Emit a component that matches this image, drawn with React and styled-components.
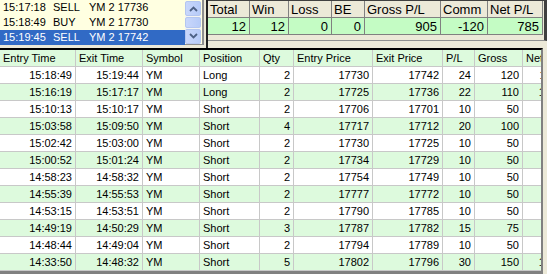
import React from 'react';
import styled, { createGlobalStyle } from 'styled-components';

const GlobalStyle = createGlobalStyle`
  html, body { margin: 0; padding: 0; background: #ECE9D8; }
  body { font-family: "Liberation Sans", Arial, sans-serif; font-size: 11px; color: #000; }
`;

const Window = styled.div`
  width: 547px;
  height: 274px;
  background: #ECE9D8;
  display: flex;
  flex-direction: column;
  overflow: hidden;
`;

const TopBar = styled.div`
  display: flex;
  height: 48px;
  flex-shrink: 0;
`;

const ListBox = styled.div`
  width: 202px;
  height: 44px;
  background: #FFFFE1;
  border-right: 2px solid #8E8F8F;
  border-bottom: 1px solid #8E8F8F;
  display: flex;
`;

const ListRows = styled.div`
  flex: 1;
  display: flex;
  flex-direction: column;
`;

const ListRow = styled.div`
  height: 15px;
  line-height: 15px;
  display: flex;
  padding-left: 3px;
  background: ${p => (p.$selected ? '#316AC5' : 'transparent')};
  color: ${p => (p.$selected ? '#fff' : '#000')};
  span:nth-child(1) { width: 50px; }
  span:nth-child(2) { width: 36px; }
`;

const ScrollBar = styled.div`
  width: 16px;
  margin: 1px 1px 0 0;
  display: flex;
  flex-direction: column;
  gap: 1px;
  background: #F4F4F0;
`;

const ScrollBtn = styled.div`
  height: ${p => p.$h}px;
  border: 1px solid #B4C6F0;
  border-radius: 2px;
  background: linear-gradient(to right, #C9D7FB, #B6CBF8);
  display: flex;
  align-items: center;
  justify-content: center;
`;

const Splitter = styled.div`
  width: 2px;
  margin-left: 2px;
  height: 48px;
  background: #202020;
`;

const Summary = styled.div`
  flex: 1;
  height: 41px;
  border-top: 1px solid #404040;
  border-bottom: 1px solid #8E8F8F;
  border-right: 3px solid #404040;
  box-sizing: border-box;
`;

const SummaryTable = styled.table`
  border-collapse: separate;
  border-spacing: 0;
  table-layout: fixed;
  width: 335px;
`;

const SumHead = styled.th`
  height: 16px;
  padding: 0 0 0 2px;
  font-weight: normal;
  text-align: left;
  font-size: 13px;
  background: #ECE9D8;
  border-right: 1px solid #808080;
  border-bottom: 1px solid #808080;
  white-space: nowrap;
  overflow: hidden;
`;

const SumCell = styled.td`
  height: 16px;
  padding: 0 3px 0 0;
  text-align: right;
  font-size: 13px;
  background: #C4FCC4;
  border-right: 1px solid #808080;
  border-bottom: 1px solid #808080;
`;

const TradesPanel = styled.div`
  flex: 1;
  margin-right: 4px;
  border-top: 2px solid #000;
  border-bottom: 3px solid #808080;
  border-right: 2px solid #808080;
  overflow: hidden;
  background: #fff;
`;

const TradesTable = styled.table`
  border-collapse: separate;
  border-spacing: 0;
  table-layout: fixed;
  width: 561px;
`;

const HeadCell = styled.th`
  height: 16px;
  padding: 0 0 0 3px;
  font-weight: normal;
  text-align: left;
  background: #DDFADD;
  border-right: 1px solid #C8C8C8;
  border-bottom: 1px solid #C8C8C8;
  white-space: nowrap;
  overflow: hidden;
`;

const Row = styled.tr`
  background: ${p => (p.$alt ? '#DDFADD' : '#FFFFFF')};
`;

const Cell = styled.td`
  height: 16px;
  line-height: 16px;
  padding: ${p => (p.$left ? '0 0 0 3px' : '0 3px 0 0')};
  text-align: ${p => (p.$left ? 'left' : 'right')};
  border-right: 1px solid #C8C8C8;
  border-bottom: 1px solid #C8C8C8;
  white-space: nowrap;
  overflow: hidden;
`;

const orders = [
  ['15:17:18', 'SELL', 'YM 2 17736'],
  ['15:18:49', 'BUY', 'YM 2 17730'],
  ['15:19:45', 'SELL', 'YM 2 17742'],
];

const sumCols = [
  ['Total', 42, '12'],
  ['Win', 39, '12'],
  ['Loss', 43, '0'],
  ['BE', 33, '0'],
  ['Gross P/L', 76, '905'],
  ['Comm', 47, '-120'],
  ['Net P/L', 55, '785'],
];

const cols = [
  ['Entry Time', 76],
  ['Exit Time', 67],
  ['Symbol', 57],
  ['Position', 60],
  ['Qty', 34],
  ['Entry Price', 79],
  ['Exit Price', 70],
  ['P/L', 32],
  ['Gross', 48],
  ['Net', 38],
];

const trades = [
  ['15:18:49', '15:19:44', 'Long', 2, 17730, 17742, 24, 120],
  ['15:16:19', '15:17:17', 'Long', 2, 17725, 17736, 22, 110],
  ['15:10:13', '15:10:17', 'Short', 2, 17706, 17701, 10, 50],
  ['15:03:58', '15:09:50', 'Short', 4, 17717, 17712, 20, 100],
  ['15:02:42', '15:03:00', 'Short', 2, 17730, 17725, 10, 50],
  ['15:00:52', '15:01:24', 'Short', 2, 17734, 17729, 10, 50],
  ['14:58:23', '14:58:32', 'Short', 2, 17754, 17749, 10, 50],
  ['14:55:39', '14:55:53', 'Short', 2, 17777, 17772, 10, 50],
  ['14:53:15', '14:53:51', 'Short', 2, 17790, 17785, 10, 50],
  ['14:49:19', '14:50:29', 'Short', 3, 17787, 17782, 15, 75],
  ['14:48:44', '14:49:04', 'Short', 2, 17794, 17789, 10, 50],
  ['14:33:50', '14:48:32', 'Short', 5, 17802, 17796, 30, 150],
];

const Arrow = ({ up }) => (
  <svg width="9" height="6" viewBox="0 0 9 6">
    <path d={up ? 'M1 5 L4.5 1.5 L8 5' : 'M1 1 L4.5 4.5 L8 1'} fill="none" stroke="#4D6185" strokeWidth="1.8" />
  </svg>
);

export default function App() {
  return (
    <Window>
      <GlobalStyle />
      <TopBar>
        <ListBox>
          <ListRows>
            {orders.map((o, i) => (
              <ListRow key={i} $selected={i === 2}>
                <span>{o[0]}</span>
                <span>{o[1]}</span>
                <span>{o[2]}</span>
              </ListRow>
            ))}
          </ListRows>
          <ScrollBar>
            <ScrollBtn $h={14}><Arrow up /></ScrollBtn>
            <ScrollBtn $h={9} />
            <ScrollBtn $h={14}><Arrow /></ScrollBtn>
          </ScrollBar>
        </ListBox>
        <Splitter />
        <Summary>
          <SummaryTable>
            <colgroup>
              {sumCols.map(c => <col key={c[0]} style={{ width: c[1] }} />)}
            </colgroup>
            <thead>
              <tr>{sumCols.map(c => <SumHead key={c[0]}>{c[0]}</SumHead>)}</tr>
            </thead>
            <tbody>
              <tr>{sumCols.map(c => <SumCell key={c[0]}>{c[2]}</SumCell>)}</tr>
            </tbody>
          </SummaryTable>
        </Summary>
      </TopBar>
      <TradesPanel>
        <TradesTable>
          <colgroup>
            {cols.map(c => <col key={c[0]} style={{ width: c[1] }} />)}
          </colgroup>
          <thead>
            <tr>{cols.map(c => <HeadCell key={c[0]}>{c[0]}</HeadCell>)}</tr>
          </thead>
          <tbody>
            {trades.map((t, i) => (
              <Row key={i} $alt={i % 2 === 1}>
                <Cell>{t[0]}</Cell>
                <Cell>{t[1]}</Cell>
                <Cell $left>YM</Cell>
                <Cell $left>{t[2]}</Cell>
                <Cell>{t[3]}</Cell>
                <Cell>{t[4]}</Cell>
                <Cell>{t[5]}</Cell>
                <Cell>{t[6]}</Cell>
                <Cell>{t[7]}</Cell>
                <Cell>{t[7] - t[3] * 4}</Cell>
              </Row>
            ))}
          </tbody>
        </TradesTable>
      </TradesPanel>
    </Window>
  );
}
